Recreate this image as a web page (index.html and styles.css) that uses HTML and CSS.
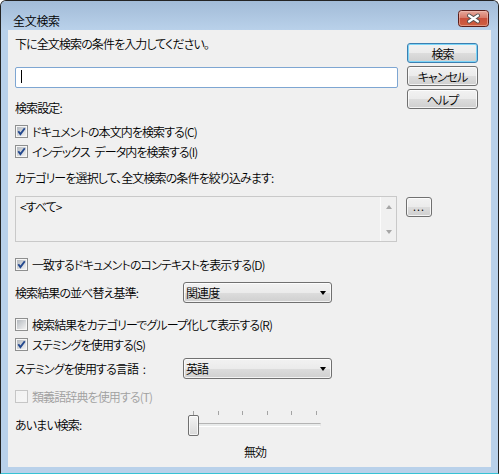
FILE: index.html
```html
<!DOCTYPE html>
<html lang="ja">
<head>
<meta charset="utf-8">
<title>全文検索</title>
<link rel="stylesheet" href="styles.css">
</head>
<body>
<svg class="defs" width="0" height="0" aria-hidden="true">
  <defs>
    <linearGradient id="cbin" x1="0" y1="0" x2="1" y2="1">
      <stop offset="0" stop-color="#b4b9bf"/>
      <stop offset="1" stop-color="#f2f2f2"/>
    </linearGradient>
    <linearGradient id="cbdis" x1="0" y1="0" x2="1" y2="1">
      <stop offset="0" stop-color="#f2f2f2"/>
      <stop offset="1" stop-color="#f6f6f6"/>
    </linearGradient>
    <symbol id="cb-on" viewBox="0 0 13 13">
      <rect x="0.5" y="0.5" width="12" height="12" fill="#f6f6f6" stroke="#8e8f8f"/>
      <rect x="2" y="2" width="9" height="9" fill="url(#cbin)"/>
      <path d="M3.3 6.3 L5.4 9.1 L9.8 3.2" fill="none" stroke="#24498f" stroke-width="1.9"/>
    </symbol>
    <symbol id="cb-off" viewBox="0 0 13 13">
      <rect x="0.5" y="0.5" width="12" height="12" fill="#f6f6f6" stroke="#8e8f8f"/>
      <rect x="2" y="2" width="9" height="9" fill="url(#cbin)"/>
    </symbol>
    <symbol id="cb-dis" viewBox="0 0 13 13">
      <rect x="0.5" y="0.5" width="12" height="12" fill="#f4f4f4" stroke="#c6c6c6"/>
      <rect x="2" y="2" width="9" height="9" fill="url(#cbdis)"/>
    </symbol>
    <linearGradient id="cg" x1="0" y1="0" x2="0" y2="1">
      <stop offset="0" stop-color="#e8aca0"/>
      <stop offset="0.45" stop-color="#d87b6a"/>
      <stop offset="0.5" stop-color="#c9503c"/>
      <stop offset="1" stop-color="#d0603f"/>
    </linearGradient>
  </defs>
</svg>

<div class="window">
  <div class="titlebar">
    <span class="title">全文検索</span>
    <svg class="close" width="31" height="17" viewBox="0 0 31 17" aria-label="閉じる">
      <rect x="0.5" y="0.5" width="30" height="16" rx="3" fill="url(#cg)" stroke="#5a1e1a"/>
      <rect x="1.5" y="1.5" width="28" height="14" rx="2" fill="none" stroke="#f3c9c0" stroke-opacity="0.5"/>
      <path d="M11 5.5 L20 11.5 M20 5.5 L11 11.5" stroke="#505050" stroke-width="4" stroke-linecap="round"/>
      <path d="M11 5.5 L20 11.5 M20 5.5 L11 11.5" stroke="#ffffff" stroke-width="2.2" stroke-linecap="round"/>
    </svg>
  </div>

  <div class="client">
    <div class="top">
      <div class="top-left">
        <div class="line">下に全文検索の条件を入力してください。</div>
        <div class="textbox"><span class="caret"></span></div>
        <div class="line section-label">検索設定:</div>
      </div>
      <div class="buttons">
        <div class="btn default">検索</div>
        <div class="btn">キャンセル</div>
        <div class="btn">ヘルプ</div>
      </div>
    </div>

    <div class="check first"><svg><use href="#cb-on"/></svg><span>ドキュメントの本文内を検索する(C)</span></div>
    <div class="check"><svg><use href="#cb-on"/></svg><span>インデックス データ内を検索する(I)</span></div>

    <div class="line cat-label">カテゴリーを選択して、全文検索の条件を絞り込みます:</div>

    <div class="list-row">
      <div class="listbox">
        <div class="list-items">&lt;すべて&gt;</div>
        <div class="scrollbar">
          <span class="arrow-up"></span>
          <span class="arrow-down"></span>
        </div>
      </div>
      <div class="btn dots-btn">...</div>
    </div>

    <div class="check context"><svg><use href="#cb-on"/></svg><span>一致するドキュメントのコンテキストを表示する(D)</span></div>

    <div class="field-row sort">
      <span class="label">検索結果の並べ替え基準:</span>
      <div class="select"><span>関連度</span><span class="drop"></span></div>
    </div>

    <div class="check group"><svg><use href="#cb-off"/></svg><span>検索結果をカテゴリーでグループ化して表示する(R)</span></div>
    <div class="check"><svg><use href="#cb-on"/></svg><span>ステミングを使用する(S)</span></div>

    <div class="field-row lang">
      <span class="label">ステミングを使用する言語 :</span>
      <div class="select"><span>英語</span><span class="drop"></span></div>
    </div>

    <div class="check thes disabled"><svg><use href="#cb-dis"/></svg><span>類義語辞典を使用する(T)</span></div>

    <div class="fuzzy">
      <span class="label">あいまい検索:</span>
      <div class="slider">
        <div class="ticks"><span></span><span></span><span></span><span></span><span></span><span></span></div>
        <div class="track"></div>
        <div class="thumb"></div>
      </div>
    </div>
    <div class="fuzzy-value">無効</div>
  </div>
</div>
</body>
</html>
```

FILE: styles.css
```css
* { box-sizing: border-box; }

html, body {
  margin: 0;
  padding: 0;
}

body {
  width: 499px;
  height: 474px;
  overflow: hidden;
  background: #ffffff;
  font-family: "Noto Sans CJK JP", "Noto Sans", sans-serif;
  font-size: 12px;
  font-weight: 350;
  line-height: 15px;
  letter-spacing: -0.9px;
  word-spacing: 3px;
  color: #000000;
  font-feature-settings: "palt";
}

.defs {
  position: absolute;
  width: 0;
  height: 0;
}

.window {
  width: 499px;
  height: 474px;
  border: 1px solid #232323;
  border-bottom-color: #36c2d4;
  border-radius: 6px 6px 0 0;
  background: #b9d1ea;
  display: flex;
  flex-direction: column;
}

.titlebar {
  height: 29px;
  flex: none;
  display: flex;
  align-items: flex-start;
  justify-content: space-between;
  padding: 0 9px 0 12px;
  background: linear-gradient(#a2bbd7, #b9d1ea);
  border-radius: 5px 5px 0 0;
}

.title {
  margin-top: 12px;
  color: #000000;
  letter-spacing: -0.3px;
}

.close {
  margin-top: 9px;
  flex: none;
}

.client {
  flex: 1;
  margin: 0 7px 6px 7px;
  background: #f0f0f0;
  padding: 6px 0 0 7px;
}

.top {
  display: flex;
}

.top-left {
  width: 383px;
}

.textbox {
  margin-top: 16px;
  height: 21px;
  border: 1px solid #7ea6d2;
  border-radius: 2px;
  background: #ffffff;
  padding: 2px 0 0 5px;
}

.caret {
  display: block;
  width: 1px;
  height: 13px;
  background: #000000;
}

.section-label {
  margin-top: 12px;
}

.buttons {
  margin-left: 9px;
  margin-top: 7px;
  width: 71px;
  display: flex;
  flex-direction: column;
  gap: 3px;
}

.btn {
  height: 20px;
  border: 1px solid #707070;
  border-radius: 3px;
  background: linear-gradient(#f2f2f2 0%, #ebebeb 50%, #dddddd 50%, #cfcfcf 100%);
  box-shadow: inset 0 0 0 1px rgba(255, 255, 255, 0.75);
  display: flex;
  align-items: center;
  justify-content: center;
}

.btn.default {
  border-color: #3c7fb1;
  box-shadow: inset 0 0 0 1px #7cd5f7;
}

.check {
  height: 20px;
  display: flex;
  align-items: center;
  gap: 4px;
}

.check svg {
  width: 13px;
  height: 13px;
  flex: none;
}

.check.first { margin-top: 6px; }
.check.context { margin-top: 12px; }
.check.group { margin-top: 11px; }
.check.thes { margin-top: 7px; }

.check.disabled { color: #a0a0a0; }

.cat-label {
  margin-top: 9px;
}

.list-row {
  margin-top: 11px;
  display: flex;
  align-items: flex-start;
}

.listbox {
  width: 382px;
  height: 46px;
  border: 1px solid #c9c9c9;
  background: #f0f0f0;
  display: flex;
}

.list-items {
  flex: 1;
  padding: 2px 0 0 4px;
}

.scrollbar {
  width: 16px;
  border-left: 1px solid #fbfbfb;
  display: flex;
  flex-direction: column;
  justify-content: space-between;
  align-items: center;
  padding: 8px 0 7px;
}

.arrow-up {
  width: 0;
  height: 0;
  border-left: 3.5px solid transparent;
  border-right: 3.5px solid transparent;
  border-bottom: 4px solid #a6a6a6;
}

.arrow-down {
  width: 0;
  height: 0;
  border-left: 3.5px solid transparent;
  border-right: 3.5px solid transparent;
  border-top: 4px solid #a6a6a6;
}

.dots-btn {
  margin-left: 9px;
  margin-top: 1px;
  width: 26px;
  height: 20px;
  font-size: 11px;
  letter-spacing: 1px;
  padding-bottom: 2px;
}

.field-row {
  height: 21px;
  display: flex;
  align-items: center;
}

.field-row .label {
  width: 168px;
  flex: none;
}

.sort { margin-top: 8px; }
.lang { margin-top: 4px; }

.select {
  width: 149px;
  height: 21px;
  border: 1px solid #707070;
  border-radius: 3px;
  background: linear-gradient(#f2f2f2 0%, #ebebeb 50%, #dddddd 50%, #cfcfcf 100%);
  box-shadow: inset 0 0 0 1px rgba(255, 255, 255, 0.75);
  display: flex;
  align-items: center;
  justify-content: space-between;
  padding: 0 5px 0 2px;
}

.drop {
  width: 0;
  height: 0;
  border-left: 3.5px solid transparent;
  border-right: 3.5px solid transparent;
  border-top: 4px solid #000000;
}

.fuzzy {
  margin-top: 5px;
  display: flex;
}

.fuzzy .label {
  width: 173px;
  flex: none;
  margin-top: 6px;
}

.slider {
  width: 134px;
  height: 28px;
  position: relative;
}

.ticks {
  margin-left: 5px;
  width: 124px;
  height: 4px;
  display: flex;
  justify-content: space-between;
}

.ticks span {
  width: 1px;
  height: 4px;
  background: #a4a4a4;
}

.track {
  margin: 8px 0 0 5px;
  width: 128px;
  height: 4px;
  border: 1px solid;
  border-color: #b4b4b4 #e6e6e6 #ffffff #b4b4b4;
  background: #e9ebeb;
}

.thumb {
  position: absolute;
  left: 0;
  top: 4px;
  width: 11px;
  height: 21px;
  border: 1px solid #707070;
  border-radius: 2px;
  background: linear-gradient(#f4f4f4, #d9d9d9);
  box-shadow: inset 0 0 0 1px rgba(255, 255, 255, 0.7);
}

.fuzzy-value {
  margin-left: 173px;
  margin-top: 5px;
  width: 134px;
  text-align: center;
}
```
